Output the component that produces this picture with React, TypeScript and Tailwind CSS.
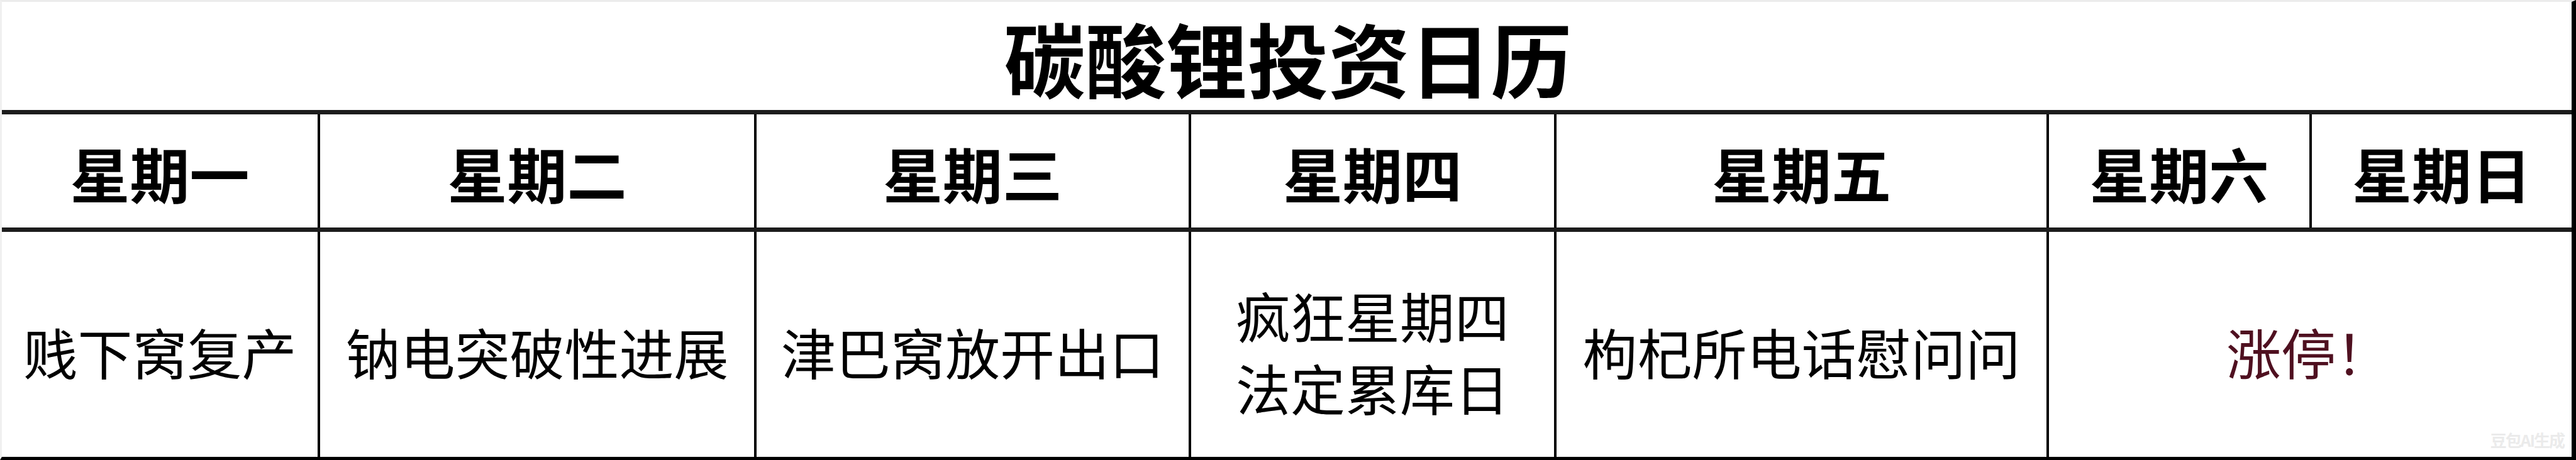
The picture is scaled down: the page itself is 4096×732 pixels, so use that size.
const days = ["星期一", "星期二", "星期三", "星期四", "星期五", "星期六", "星期日"];

const notes: { lines: string[]; red?: boolean; span?: boolean }[] = [
  { lines: ["贱下窝复产"] },
  { lines: ["钠电突破性进展"] },
  { lines: ["津巴窝放开出口"] },
  { lines: ["疯狂星期四", "法定累库日"] },
  { lines: ["枸杞所电话慰问问"] },
  { lines: ["涨停！"], red: true, span: true },
];

const cols = "grid-cols-[506px_694px_691px_581px_783px_418px_1fr]";

export default function App() {
  return (
    <div
      className="relative flex h-[732px] w-[4096px] flex-col overflow-hidden border-t-[3px] border-r-[7px] border-b-[5px] border-l-[3px] border-t-[#ececec] border-r-black border-b-black border-l-[#f0f0f0] bg-white text-black"
      style={{ fontFamily: '"Noto Sans CJK SC", "Noto Sans", sans-serif' }}
    >
      {/* title */}
      <div className="flex h-[179px] shrink-0 items-center justify-center border-b-[7px] border-[#1c1c1c] pt-[4px] pl-[4px]">
        <h1 className="text-[129px] leading-[1.2] font-bold">碳酸锂投资日历</h1>
      </div>

      {/* weekday header */}
      <div className={`grid h-[187px] shrink-0 border-b-[7px] border-[#1c1c1c] ${cols}`}>
        {days.map((d, i) => (
          <div
            key={d}
            className={`flex items-center justify-center pt-[6px] text-[95px] leading-[1.2] font-bold ${
              i < days.length - 1 ? "border-r-[4px] border-black" : ""
            }`}
          >
            {d}
          </div>
        ))}
      </div>

      {/* notes */}
      <div className={`grid flex-1 ${cols}`}>
        {notes.map((n, i) => (
          <div
            key={i}
            className={`flex flex-col items-center justify-center pt-[22px] text-[87px] leading-[115px] font-normal ${
              n.span ? "col-span-2" : "border-r-[4px] border-black"
            } ${n.red ? "pr-[6px] text-[#4f1020]" : ""}`}
          >
            {n.lines.map((l) => (
              <span key={l} className="whitespace-nowrap">
                {l}
              </span>
            ))}
          </div>
        ))}
      </div>

      {/* faint watermark */}
      <span className="absolute right-[12px] bottom-[12px] text-[26px] leading-[1.2] font-bold tracking-[-2px] text-[#ebebeb]">
        豆包AI生成
      </span>
    </div>
  );
}
